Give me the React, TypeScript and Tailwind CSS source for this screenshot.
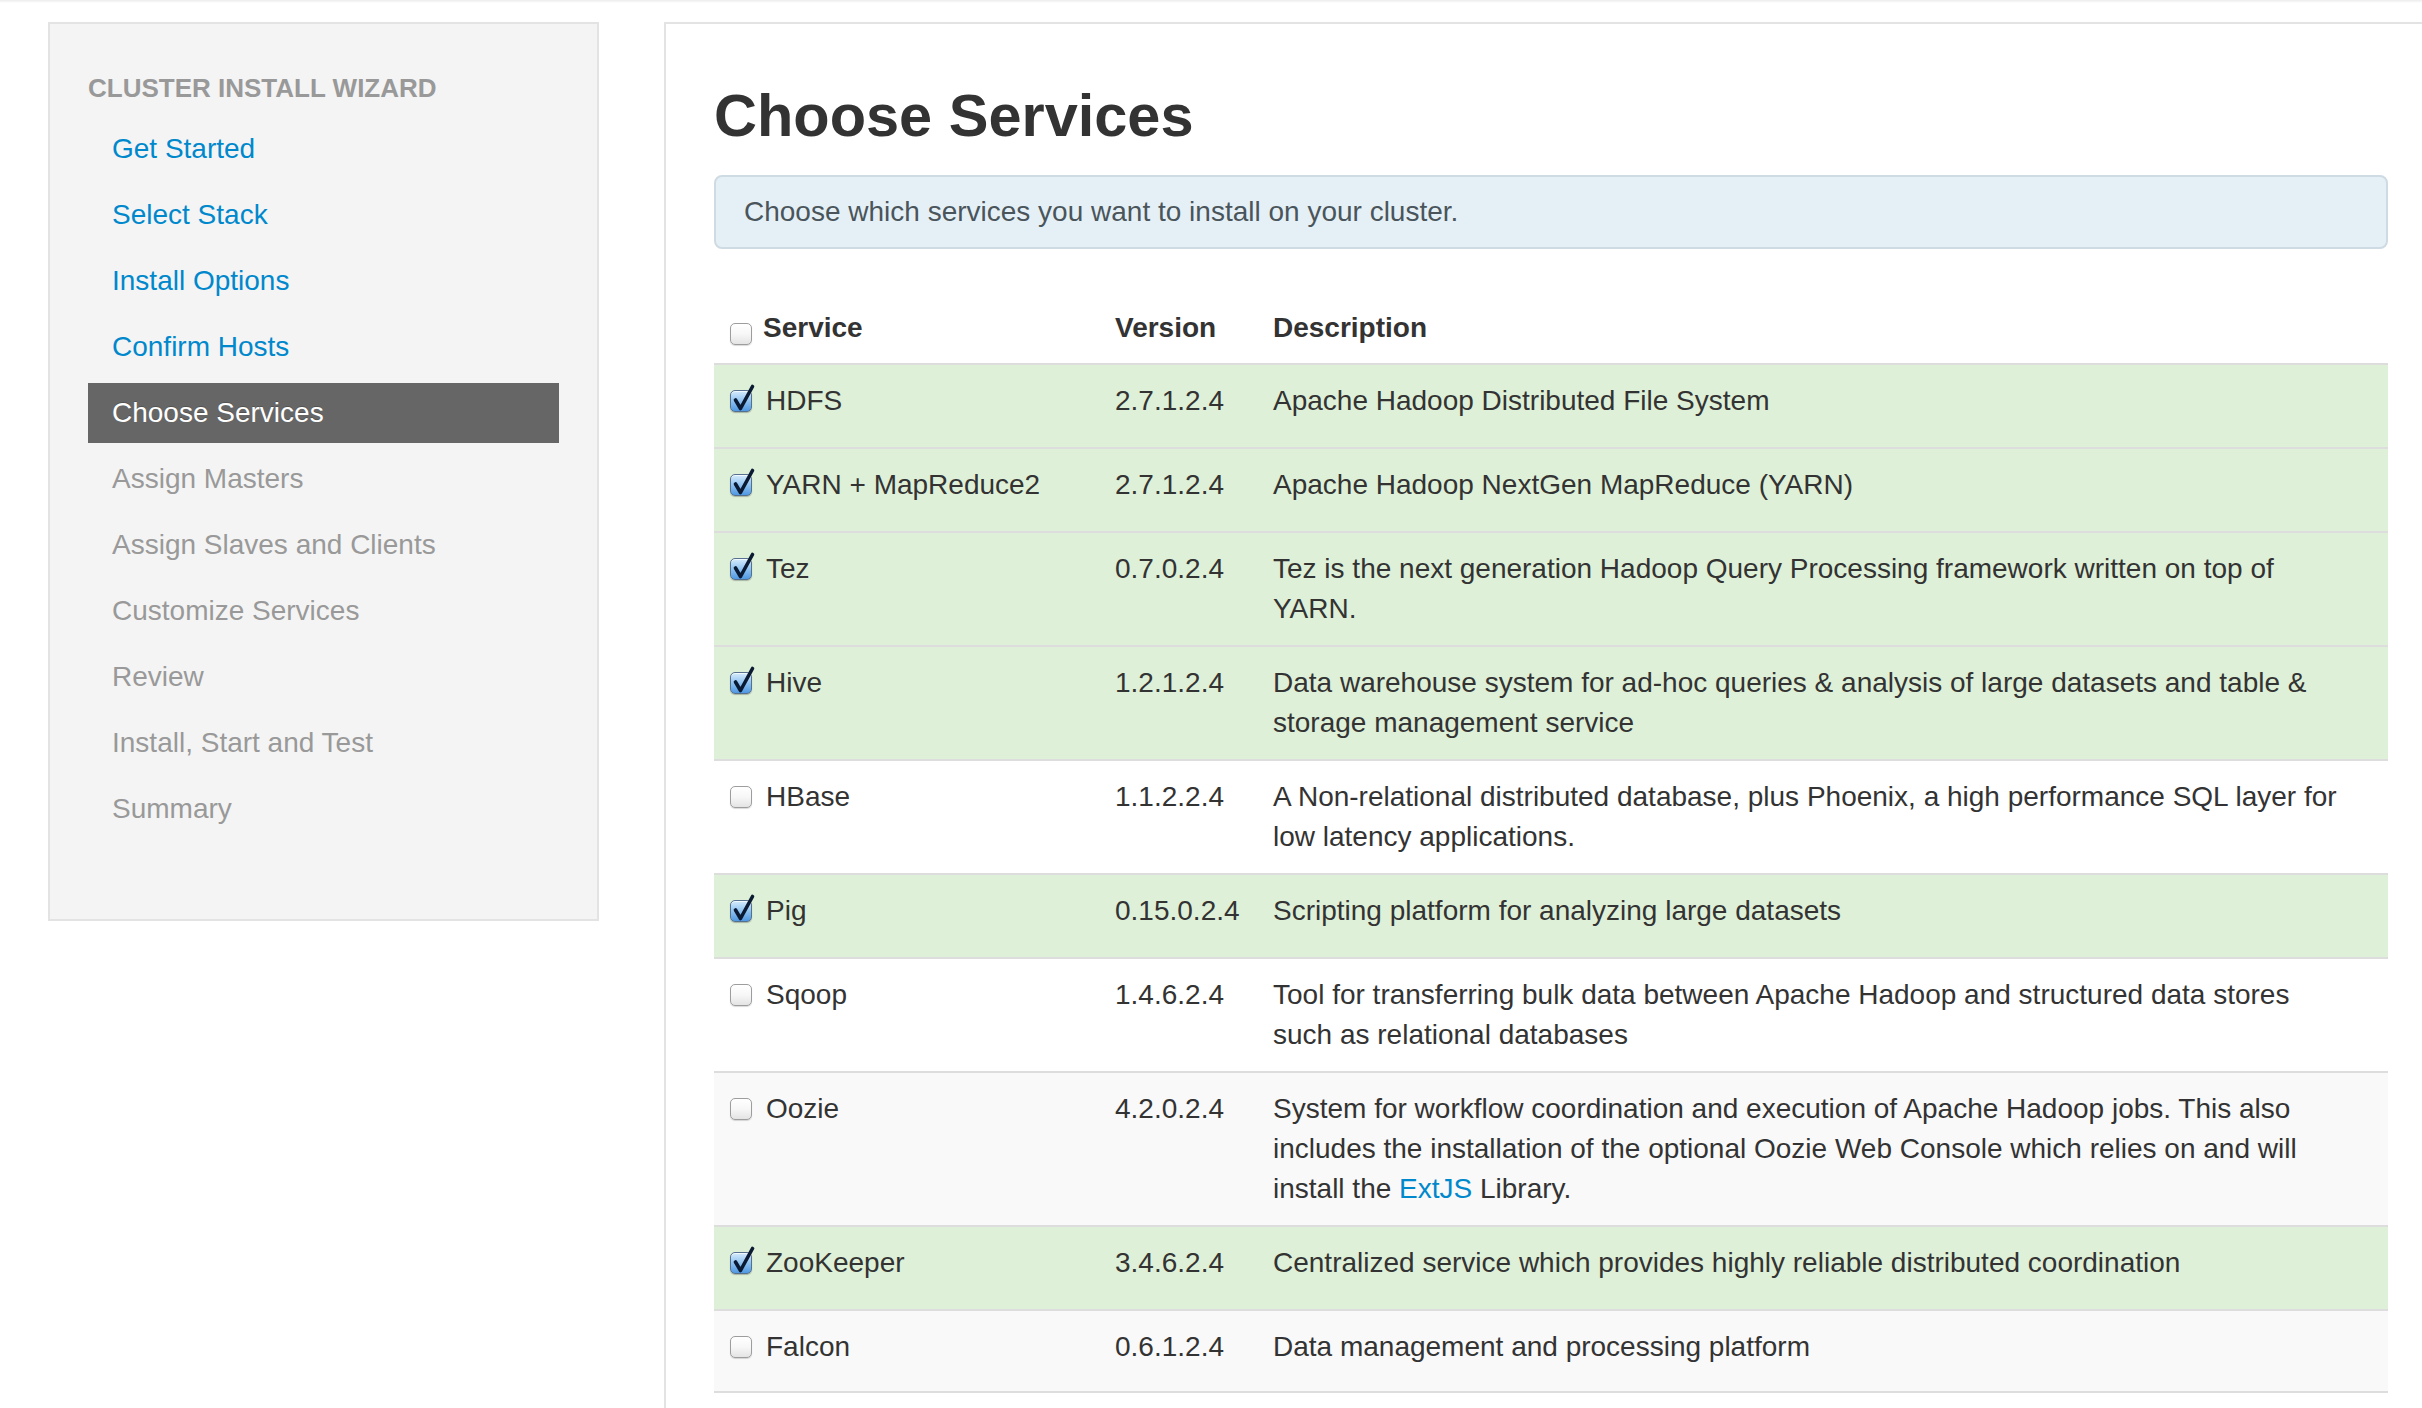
import type { ReactNode } from "react";

const steps = [
  { label: "Get Started", state: "done" },
  { label: "Select Stack", state: "done" },
  { label: "Install Options", state: "done" },
  { label: "Confirm Hosts", state: "done" },
  { label: "Choose Services", state: "active" },
  { label: "Assign Masters", state: "todo" },
  { label: "Assign Slaves and Clients", state: "todo" },
  { label: "Customize Services", state: "todo" },
  { label: "Review", state: "todo" },
  { label: "Install, Start and Test", state: "todo" },
  { label: "Summary", state: "todo" },
];

const services: { name: string; version: string; desc: ReactNode; on: boolean }[] = [
  { name: "HDFS", version: "2.7.1.2.4", desc: "Apache Hadoop Distributed File System", on: true },
  { name: "YARN + MapReduce2", version: "2.7.1.2.4", desc: "Apache Hadoop NextGen MapReduce (YARN)", on: true },
  {
    name: "Tez",
    version: "0.7.0.2.4",
    desc: "Tez is the next generation Hadoop Query Processing framework written on top of YARN.",
    on: true,
  },
  {
    name: "Hive",
    version: "1.2.1.2.4",
    desc: "Data warehouse system for ad-hoc queries & analysis of large datasets and table & storage management service",
    on: true,
  },
  {
    name: "HBase",
    version: "1.1.2.2.4",
    desc: "A Non-relational distributed database, plus Phoenix, a high performance SQL layer for low latency applications.",
    on: false,
  },
  { name: "Pig", version: "0.15.0.2.4", desc: "Scripting platform for analyzing large datasets", on: true },
  {
    name: "Sqoop",
    version: "1.4.6.2.4",
    desc: "Tool for transferring bulk data between Apache Hadoop and structured data stores such as relational databases",
    on: false,
  },
  {
    name: "Oozie",
    version: "4.2.0.2.4",
    desc: (
      <>
        {"System for workflow coordination and execution of Apache Hadoop jobs. This also includes the installation of the optional Oozie Web Console which relies on and will install the "}
        <a href="#" className="text-[#0088cc]">
          ExtJS
        </a>
        {" Library."}
      </>
    ),
    on: false,
  },
  {
    name: "ZooKeeper",
    version: "3.4.6.2.4",
    desc: "Centralized service which provides highly reliable distributed coordination",
    on: true,
  },
  { name: "Falcon", version: "0.6.1.2.4", desc: "Data management and processing platform", on: false },
];

function Checkbox({ on }: { on: boolean }) {
  if (!on) {
    return (
      <span className="block w-[22px] h-[22px] shrink-0 rounded-[5px] border border-[#9d9d9d] bg-gradient-to-b from-white via-[#f7f7f7] to-[#e4e4e4] shadow-[0_1px_1px_rgba(0,0,0,0.15)]" />
    );
  }
  return (
    <span className="relative block w-[22px] h-[22px] shrink-0 rounded-[5px] border border-[#55718f] bg-gradient-to-b from-[#d6ebfc] via-[#8fc3f1] to-[#4f98e2] shadow-[inset_0_1px_0_rgba(255,255,255,0.7),0_1px_1px_rgba(0,0,0,0.25)]">
      {/* aqua style check mark, pokes out over the top edge */}
      <svg className="absolute left-0 -top-[7px] overflow-visible" width="24" height="30" viewBox="0 -6 24 30">
        <path
          d="M4.5 10 L9.5 18.5 L21.5 -3.5"
          fill="none"
          stroke="#0b1a33"
          strokeWidth="3.6"
          strokeLinecap="round"
          strokeLinejoin="round"
        />
      </svg>
    </span>
  );
}

export default function App() {
  return (
    <div className="w-[2422px] h-[1408px] overflow-hidden bg-white font-['Liberation_Sans',Arial,sans-serif] text-[#333]">
      <div className="h-[3px] bg-gradient-to-b from-[#ececec] to-white" />
      <div className="flex items-start gap-[65px] pl-[48px] pt-[19px]">
        {/* Wizard steps */}
        <aside className="w-[551px] shrink-0 bg-[#f4f4f4] border-2 border-[#e3e3e3] px-[38px] pt-[38px] pb-[80px]">
          <div className="py-[6px] text-[26px] leading-[40px] font-bold uppercase text-[#999]">
            Cluster Install Wizard
          </div>
          <ul className="mt-[5px] flex flex-col gap-[6px]">
            {steps.map((s) => (
              <li
                key={s.label}
                className={`h-[60px] py-[10px] pl-[24px] text-[28px] leading-[40px] whitespace-nowrap ${
                  s.state === "active"
                    ? "bg-[#666] text-white [text-shadow:0_-1px_0_rgba(0,0,0,0.2)]"
                    : s.state === "done"
                    ? "text-[#0088cc]"
                    : "text-[#999]"
                }`}
              >
                {s.label}
              </li>
            ))}
          </ul>
        </aside>

        {/* Main panel */}
        <main className="w-[1774px] shrink-0 h-[1500px] border-2 border-[#e3e3e3] px-[48px] pt-[59px]">
          <h2 className="text-[59.5px] leading-[66px] font-bold text-[#333]">Choose Services</h2>
          <div className="mt-[26px] rounded-[8px] border-2 border-[#cfdbe2] bg-[#e5f0f6] py-[15px] pl-[28px] text-[28px] leading-[40px] text-[#4a555b]">
            Choose which services you want to install on your cluster.
          </div>

          <div className="mt-[43px] text-[28px] leading-[40px]">
            <div className="grid grid-cols-[385px_158px_1fr] pt-[16px] pb-[15px] font-bold">
              <div className="flex items-start pl-[16px]">
                <span className="mt-[15px]">
                  <Checkbox on={false} />
                </span>
                <span className="ml-[11px]">Service</span>
              </div>
              <div className="px-[16px]">Version</div>
              <div className="pl-[16px]">Description</div>
            </div>

            {services.map((s, i) => (
              <div
                key={s.name}
                className={`grid grid-cols-[385px_158px_1fr] min-h-[84px] py-[16px] border-t-2 border-[#ddd] ${
                  i === services.length - 1 ? "border-b-2" : ""
                } ${s.on ? "bg-[#dff0d8]" : i % 2 === 1 ? "bg-[#f9f9f9]" : "bg-white"}`}
              >
                <div className="flex items-start pl-[16px]">
                  <span className="mt-[9px]">
                    <Checkbox on={s.on} />
                  </span>
                  <span className="ml-[14px]">{s.name}</span>
                </div>
                <div className="px-[16px] whitespace-nowrap">{s.version}</div>
                <div className="pl-[16px] pr-[35px]">{s.desc}</div>
              </div>
            ))}
          </div>
        </main>
      </div>
    </div>
  );
}
